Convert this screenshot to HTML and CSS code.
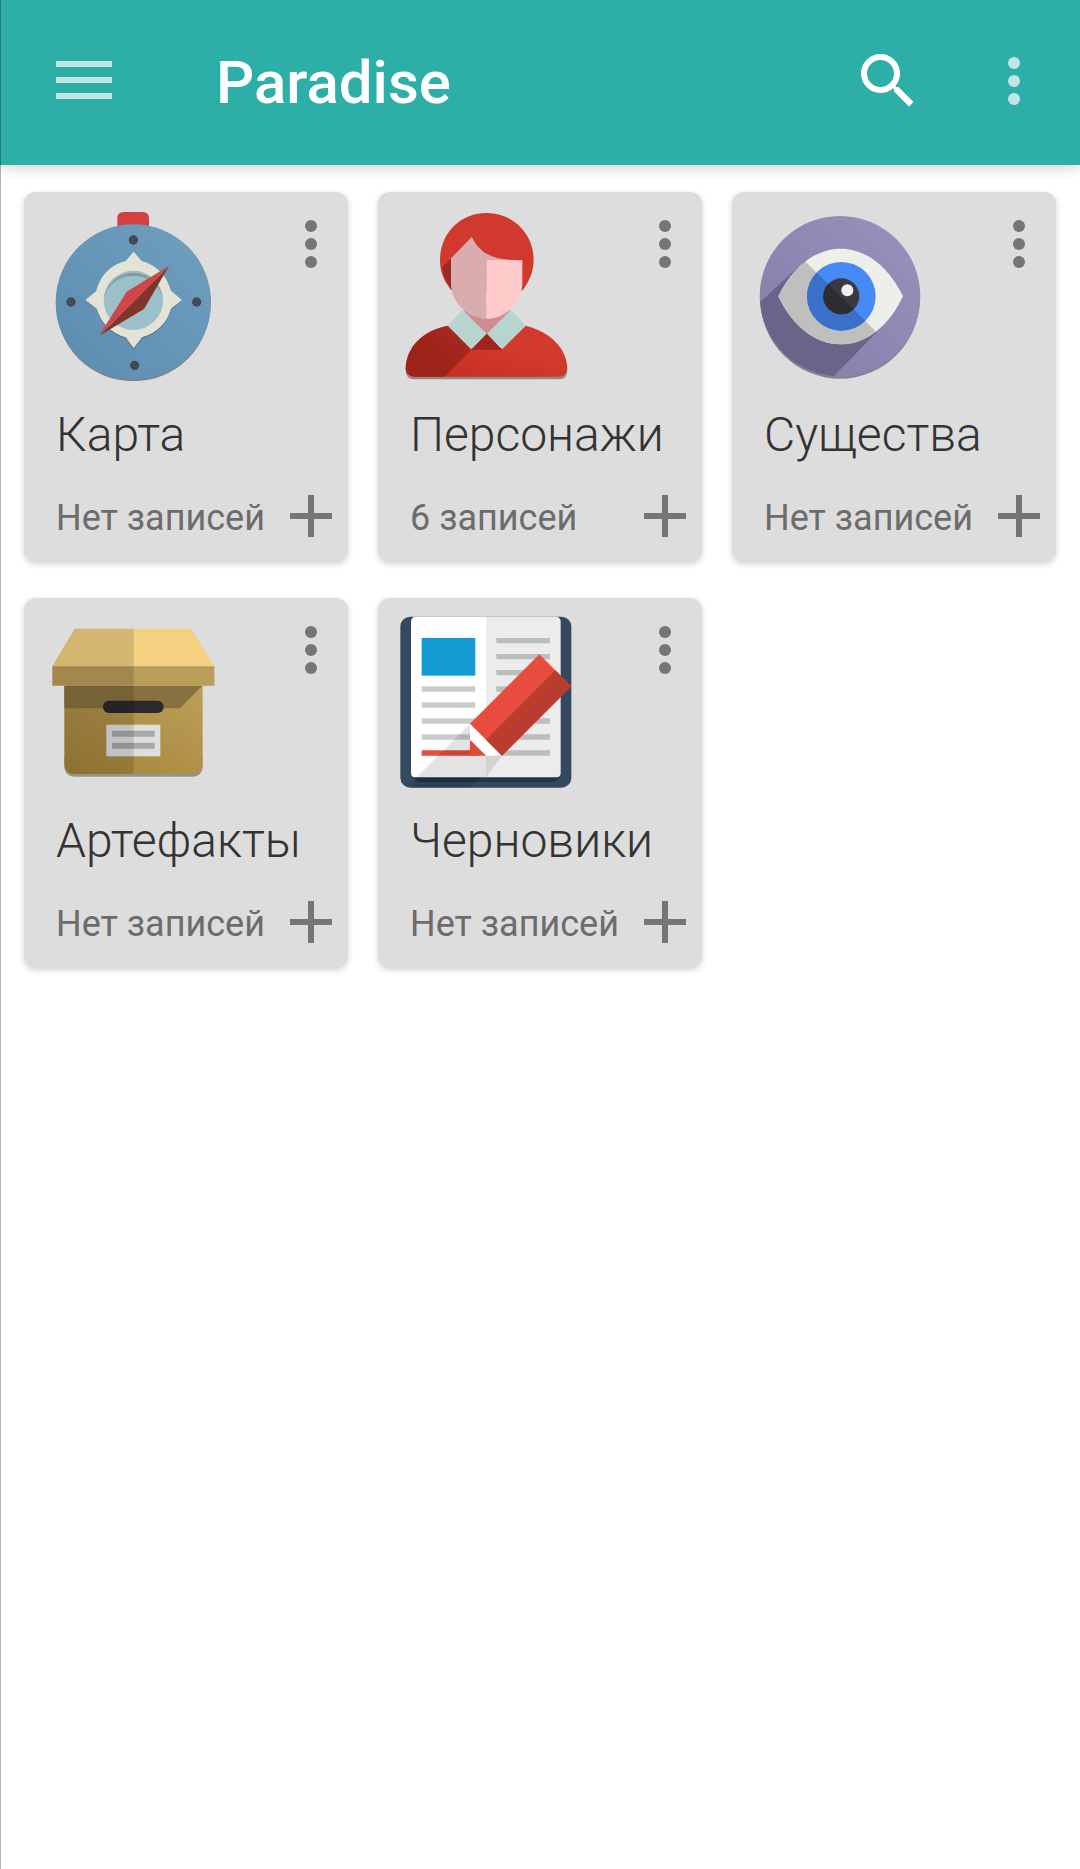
FILE: index.html
```html
<!DOCTYPE html>
<html lang="ru">
<head>
  <meta charset="UTF-8" />
  <meta name="viewport" content="width=device-width, initial-scale=1" />
  <title>Paradise</title>
  <link rel="stylesheet" href="styles.css">
</head>
<body>
  <!-- shared icons -->
  <svg class="sprite" aria-hidden="true">
    <symbol id="dots" viewBox="0 0 24 24">
      <circle cx="12" cy="6" r="2" /><circle cx="12" cy="12" r="2" /><circle cx="12" cy="18" r="2" />
    </symbol>
    <symbol id="plus" viewBox="0 0 24 24">
      <path d="M5 11h6V5h2v6h6v2h-6v6h-2v-6H5z" />
    </symbol>
  </svg>

  <header class="toolbar">
    <button class="icon-btn faded" aria-label="Меню">
      <svg viewBox="0 0 72 72"><path d="M8 16h56v6H8zM8 32h56v6H8zM8 48h56v6H8z" /></svg>
    </button>
    <h1>Paradise</h1>
    <button class="icon-btn" aria-label="Поиск">
      <svg viewBox="0 0 24 24"><path d="M15.5 14h-.79l-.28-.27A6.47 6.47 0 0 0 16 9.500 6.500 6.500 0 1 0 9.500 16c1.610 0 3.090-.59 4.230-1.570l.27.28v.79l5 4.990L20.490 19l-4.990-5zm-6 0a4.500 4.500 0 1 1 0-9 4.500 4.500 0 0 1 0 9z" /></svg>
    </button>
    <button class="icon-btn faded" aria-label="Ещё"><svg><use href="#dots" /></svg></button>
  </header>

  <main class="grid">
    <section class="card">
      <div class="card-top">
        <svg class="picture" viewBox="108 90 516 516" aria-hidden="true">
          <defs>
            <linearGradient id="blue" x1="1" y1="0" x2="0" y2="1">
              <stop offset="0" stop-color="#709fbf" /><stop offset="1" stop-color="#5b8cb0" />
            </linearGradient>
          </defs>
          <path d="M322 145v-30q0-19 19-19h57q19 0 19 19v30z" fill="#d24044" />
          <circle cx="370" cy="372" r="232" fill="#7d8488" />
          <circle cx="370" cy="366" r="233" fill="url(#blue)" />
          <g fill="#464955">
            <circle cx="370" cy="180" r="14" /><circle cx="183" cy="366" r="14" />
            <circle cx="560" cy="366" r="14" /><circle cx="374" cy="556" r="14" />
          </g>
          <path id="rose" d="M371 219L395 247Q462 266 483 334L516 362L483 389Q464 455 396 476L371 509L347 476Q281 456 260 389L226 362L258 334Q278 265 347 247Z" fill="#4e7891" />
          <path d="M371 215L395 243Q462 262 483 332L516 360L483 386Q464 451 396 472L371 505L347 472Q281 452 260 386L226 360L258 334Q278 261 347 243Z" fill="#e4e3d8" />
          <circle cx="370" cy="361" r="89" fill="#9cc0ca" />
          <path d="M282 354a89 89 0 0 1 176 0a90 84 0 0 0-176 0z" fill="#829ba0" />
          <path d="M268 467L402 387L477 258z" fill="#81342a" />
          <path d="M268 466L350 335L476 258L377 360z" fill="#d04747" />
        </svg>
        <button class="icon-btn" aria-label="Действия"><svg><use href="#dots" /></svg></button>
      </div>
      <h2>Карта</h2>
      <div class="card-bottom">
        <p>Нет записей</p>
        <button class="icon-btn" aria-label="Добавить"><svg><use href="#plus" /></svg></button>
      </div>
    </section>

    <section class="card">
      <div class="card-top">
        <svg class="picture" viewBox="105 90 516 516" aria-hidden="true">
          <defs>
            <linearGradient id="darkRed" x1="0" y1="1" x2="1" y2="0">
              <stop offset="0.4" stop-color="#9d2218" /><stop offset="1" stop-color="#a62c23" />
            </linearGradient>
            <linearGradient id="red" x1="0" y1="1" x2="1" y2="0">
              <stop offset="0" stop-color="#c82a20" /><stop offset="0.6" stop-color="#d13a2d" />
            </linearGradient>
          </defs>
          <path d="M122 570q0 28 26 28H582q25 0 25-28z" fill="#948886" />
          <path d="M300 380H432L440 430L366 480L290 430z" fill="#cf8c91" />
          <path d="M250 437L318 505H412L482 437C560 456 607 510 607 566Q605 590 580 590H148Q124 588 122 566C124 500 175 450 250 437z" fill="url(#red)" />
          <path d="M250 437L318 509L239 590H148Q124 588 122 566C124 500 175 450 250 437z" fill="url(#darkRed)" />
          <path d="M365 460L412 509H318z" fill="#9e241c" />
          <path d="M292 389L365 461L318 507L248 437z" fill="#b7d5ce" />
          <path d="M438 389L482 437L412 507L366 461z" fill="#b7d5ce" />
          <path d="M258 330C232 296 225 270 225 240C225 160 286 99 365 99S506 160 506 240C506 275 492 307 470 334z" fill="#d2392e" />
          <path d="M231 262L259 234V328Q237 298 231 262z" fill="#9e2822" />
          <path d="M258 235L320 171L365 230L364 416C315 418 258 372 258 310z" fill="#d9adae" />
          <path d="M364 239H472V310C472 372 415 418 364 416z" fill="#ffcbca" />
          <path d="M320 170C340 215 380 241 472 241V170L400 130z" fill="#d2392e" />
          <path d="M320 171C336 208 368 236 440 240H364V300L310 240z" fill="#d9adae" />
        </svg>
        <button class="icon-btn" aria-label="Действия"><svg><use href="#dots" /></svg></button>
      </div>
      <h2>Персонажи</h2>
      <div class="card-bottom">
        <p>6 записей</p>
        <button class="icon-btn" aria-label="Добавить"><svg><use href="#plus" /></svg></button>
      </div>
    </section>

    <section class="card">
      <div class="card-top">
        <svg class="picture" viewBox="102 90 516 516" aria-hidden="true">
          <defs>
            <linearGradient id="purple" x1="1" y1="0" x2="0" y2="1">
              <stop offset="0" stop-color="#9a92bd" /><stop offset="1" stop-color="#857ba9" />
            </linearGradient>
            <clipPath id="disc"><circle cx="360" cy="349" r="240" /></clipPath>
            <clipPath id="eyeShade"><path d="M100 90L470 457L360 606H100z" /></clipPath>
          </defs>
          <circle cx="360" cy="357" r="239" fill="#85838d" />
          <circle cx="360" cy="349" r="241" fill="url(#purple)" />
          <path d="M256 242L120 366V600H330L470 457z" fill="#6b6389" clip-path="url(#disc)" />
          <path d="M175 349C218 260 286 206 362 206S506 260 549 349C506 440 438 493 362 493S218 440 175 349z" fill="#eeefea" />
          <path d="M175 349C218 260 286 206 362 206S506 260 549 349C506 440 438 493 362 493S218 440 175 349z" fill="#bfc0bd" clip-path="url(#eyeShade)" />
          <circle cx="364" cy="349" r="103" fill="#478af6" />
          <circle cx="364" cy="349" r="103" fill="#3b70c8" clip-path="url(#eyeShade)" />
          <circle cx="364" cy="349" r="54" fill="#3a393f" />
          <circle cx="364" cy="349" r="54" fill="#2d2c31" clip-path="url(#eyeShade)" />
          <circle cx="382" cy="331" r="18" fill="#f4eeee" />
        </svg>
        <button class="icon-btn" aria-label="Действия"><svg><use href="#dots" /></svg></button>
      </div>
      <h2>Существа</h2>
      <div class="card-bottom">
        <p>Нет записей</p>
        <button class="icon-btn" aria-label="Добавить"><svg><use href="#plus" /></svg></button>
      </div>
    </section>

    <section class="card">
      <div class="card-top">
        <svg class="picture" viewBox="108 78 516 516" aria-hidden="true">
          <defs>
            <linearGradient id="boxSide" x1="1" y1="0" x2="0" y2="1">
              <stop offset="0" stop-color="#be9f58" /><stop offset="1" stop-color="#a38339" />
            </linearGradient>
          </defs>
          <path d="M163 500H578V532Q575 560 548 560H193Q166 560 163 532z" fill="#98938a" />
          <path d="M163 287H578V522Q576 552 548 552H193Q165 552 163 522z" fill="url(#boxSide)" />
          <path d="M163 287H577L510 355H163z" fill="#87713e" />
          <rect x="279" y="332" width="182" height="37" rx="18" fill="#2a2a2b" />
          <rect x="289" y="404" width="162" height="95" fill="#dedfdf" />
          <path d="M306 422H434V440H306zM306 458H434V476H306z" fill="#a7a9a9" />
          <path d="M194 116H543L613 229H127z" fill="#f3d180" />
          <path d="M127 229H613V287H127z" fill="#ba9d58" />
          <path d="M194 116H371V552H193Q165 552 163 522V287H127V229z" fill="#000" opacity=".13" />
        </svg>
        <button class="icon-btn" aria-label="Действия"><svg><use href="#dots" /></svg></button>
      </div>
      <h2>Артефакты</h2>
      <div class="card-bottom">
        <p>Нет записей</p>
        <button class="icon-btn" aria-label="Добавить"><svg><use href="#plus" /></svg></button>
      </div>
    </section>

    <section class="card">
      <div class="card-top">
        <svg class="picture" viewBox="105 78 516 516" aria-hidden="true">
          <rect x="106" y="80" width="513" height="513" rx="30" fill="#34495e" />
          <path d="M140 560L158 576H568L587 560z" fill="#243442" />
          <path d="M138 96Q138 80 154 80H363V562H152Q138 562 138 548z" fill="#fff" />
          <path d="M363 80H571Q587 80 587 96V548Q587 562 573 562H363z" fill="#ececec" />
          <rect x="170" y="144" width="161" height="113" fill="#159bd3" />
          <path d="M170 289H331V305H170zM170 337H331V353H170zM170 385H331V401H170zM170 433H331V449H170z" fill="#cbcbcb" />
          <path d="M394 144H555V160H394zM394 192H555V208H394zM394 240H555V256H394zM394 289H555V305H394zM394 385H555V401H394zM394 433H555V449H394zM394 481H555V497H394z" fill="#bdbdbd" />
          <path d="M170 481H340V497H170z" fill="#e74c3c" />
          <path d="M315 401L155 562H363L411 497z" fill="#000" opacity=".11" />
          <path d="M155 562H350L318 593H136z" fill="#000" opacity=".1" />
          <path d="M315 401L411 497H363L315 449z" fill="#fff" />
          <path d="M315 449L363 497H315z" fill="#e04a3b" />
          <path d="M523 193L619 289L411 497L315 401z" fill="#e74c3c" />
          <path d="M571 241L619 289L411 497L363 449z" fill="#b93c2f" />
        </svg>
        <button class="icon-btn" aria-label="Действия"><svg><use href="#dots" /></svg></button>
      </div>
      <h2>Черновики</h2>
      <div class="card-bottom">
        <p>Нет записей</p>
        <button class="icon-btn" aria-label="Добавить"><svg><use href="#plus" /></svg></button>
      </div>
    </section>
  </main>
</body>
</html>
```
FILE: styles.css
```css
:root {
  --bar-color: #2dafa8;
  --card-color: #ddd;
  --title-color: #333;
  --muted-color: #6c6c6c;
  --icon-color: #757575;
}

* {
  box-sizing: border-box;
}

body {
  margin: 0;
  min-height: 100vh;
  background-color: #fff;
  font-family: Roboto, 'Noto Sans', sans-serif;
}

/* thin edge down the left side */
body::before {
  content: '';
  position: fixed;
  top: 0;
  bottom: 0;
  left: 0;
  width: 1px;
  background-color: rgba(0, 0, 0, 0.3);
}

h1, h2, p {
  margin: 0;
}

.sprite {
  display: none;
}

.toolbar {
  display: flex;
  align-items: center;
  height: 165px;
  padding: 0 30px 3px 48px;
  background-color: var(--bar-color);
  box-shadow: 0 3px 12px rgba(0, 0, 0, 0.18);
  color: #fff;
}

.toolbar h1 {
  flex: 1;
  padding-top: 4px;
  margin-left: 96px;
  font-size: 60px;
  font-weight: 500;
  line-height: 72px;
}

.toolbar .icon-btn + .icon-btn {
  margin-left: 54px;
}

.icon-btn {
  flex: none;
  width: 72px;
  height: 72px;
  padding: 0;
  border: none;
  background: none;
  color: inherit;
  cursor: pointer;
}

.icon-btn svg {
  display: block;
  width: 72px;
  height: 72px;
  fill: currentColor;
}

.faded {
  opacity: 0.7;
}

.grid {
  display: grid;
  grid-template-columns: repeat(3, 1fr);
  gap: 36px 30px;
  padding: 27px 24px;
}

.card {
  padding: 16px 1px 10px 22px;
  border-radius: 12px;
  background-color: var(--card-color);
  box-shadow: 0 2px 6px rgba(0, 0, 0, 0.18);
  color: var(--icon-color);
}

.card-top {
  display: flex;
  justify-content: space-between;
  align-items: flex-start;
}

.picture {
  width: 172px;
  height: 172px;
  margin-top: 2px;
}

.card h2 {
  padding-left: 10px;
  margin-top: 25px;
  color: var(--title-color);
  font-size: 48px;
  font-weight: 300;
  line-height: 56px;
}

.card-bottom {
  display: flex;
  justify-content: space-between;
  align-items: center;
  margin-top: 17px;
  padding-left: 10px;
}

.card-bottom p {
  padding-top: 3px;
  color: var(--muted-color);
  font-size: 36px;
  line-height: 42px;
  white-space: nowrap;
}
```
